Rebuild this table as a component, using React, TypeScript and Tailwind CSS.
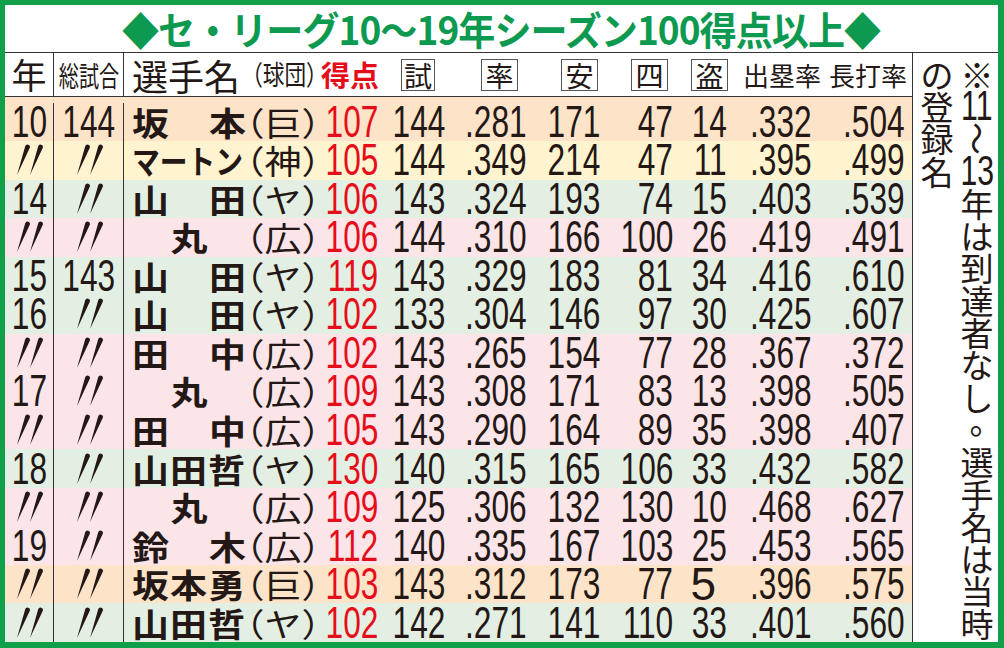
import type { ReactNode } from "react"

// セ・リーグ 10〜19年 シーズン100得点以上の一覧表
type Row = {
  y: string
  g: string
  name: string
  team: string
  pts: string
  gp: string
  avg: string
  h: string
  bb: string
  sb: string
  obp: string
  slg: string
}

const rows: Row[] = [
  { y: "10", g: "144", name: "坂本", team: "巨", pts: "107", gp: "144", avg: ".281", h: "171", bb: "47", sb: "14", obp: ".332", slg: ".504" },
  { y: "//", g: "//", name: "マートン", team: "神", pts: "105", gp: "144", avg: ".349", h: "214", bb: "47", sb: "11", obp: ".395", slg: ".499" },
  { y: "14", g: "//", name: "山田", team: "ヤ", pts: "106", gp: "143", avg: ".324", h: "193", bb: "74", sb: "15", obp: ".403", slg: ".539" },
  { y: "//", g: "//", name: "丸", team: "広", pts: "106", gp: "144", avg: ".310", h: "166", bb: "100", sb: "26", obp: ".419", slg: ".491" },
  { y: "15", g: "143", name: "山田", team: "ヤ", pts: "119", gp: "143", avg: ".329", h: "183", bb: "81", sb: "34", obp: ".416", slg: ".610" },
  { y: "16", g: "//", name: "山田", team: "ヤ", pts: "102", gp: "133", avg: ".304", h: "146", bb: "97", sb: "30", obp: ".425", slg: ".607" },
  { y: "//", g: "//", name: "田中", team: "広", pts: "102", gp: "143", avg: ".265", h: "154", bb: "77", sb: "28", obp: ".367", slg: ".372" },
  { y: "17", g: "//", name: "丸", team: "広", pts: "109", gp: "143", avg: ".308", h: "171", bb: "83", sb: "13", obp: ".398", slg: ".505" },
  { y: "//", g: "//", name: "田中", team: "広", pts: "105", gp: "143", avg: ".290", h: "164", bb: "89", sb: "35", obp: ".398", slg: ".407" },
  { y: "18", g: "//", name: "山田哲", team: "ヤ", pts: "130", gp: "140", avg: ".315", h: "165", bb: "106", sb: "33", obp: ".432", slg: ".582" },
  { y: "//", g: "//", name: "丸", team: "広", pts: "109", gp: "125", avg: ".306", h: "132", bb: "130", sb: "10", obp: ".468", slg: ".627" },
  { y: "19", g: "//", name: "鈴木", team: "広", pts: "112", gp: "140", avg: ".335", h: "167", bb: "103", sb: "25", obp: ".453", slg: ".565" },
  { y: "//", g: "//", name: "坂本勇", team: "巨", pts: "103", gp: "143", avg: ".312", h: "173", bb: "77", sb: "5", obp: ".396", slg: ".575" },
  { y: "//", g: "//", name: "山田哲", team: "ヤ", pts: "102", gp: "142", avg: ".271", h: "141", bb: "110", sb: "33", obp: ".401", slg: ".560" },
]

// 球団ごとの行の背景色
const teamBg: Record<string, string> = {
  巨: "bg-[#fde4c8]",
  神: "bg-[#fff4cf]",
  ヤ: "bg-[#e4efe3]",
  広: "bg-[#fbe5e8]",
}

const jp = "font-['Noto_Sans_CJK_JP',sans-serif]"

// 右端の縦書き注記（1文字ずつ）
const noteRight = ["※", "11", "～", "13", "年", "は", "到", "達", "者", "な", "し", "。", "選", "手", "名", "は", "当", "時"]
const noteLeft = ["の", "登", "録", "名"]

// 同上記号（〃）
function Ditto() {
  return (
    <svg width="30" height="32" viewBox="0 0 30 32" className="fill-[#231815]">
      <path d="M11.2 2.2a2.4 2.4 0 0 1 4.6 1.5L3 31z" />
      <path d="M24.2 2.2a2.4 2.4 0 0 1 4.6 1.5L16 31z" />
    </svg>
  )
}

function Num({ v, w, red }: { v: string; w: string; red?: boolean }) {
  return (
    <div className={`flex shrink-0 justify-end ${w} ${red ? "text-[#e60d1b]" : ""}`}>
      <span className="inline-block shrink-0 origin-right scale-x-[0.72] whitespace-nowrap">{v}</span>
    </div>
  )
}

function Name({ name }: { name: string }) {
  let inner: ReactNode
  if (name === "マートン") {
    inner = <span className="inline-block origin-left scale-x-[0.75] whitespace-nowrap">{name}</span>
  } else if (name.length === 2) {
    inner = (
      <span className="flex w-full justify-between">
        <span>{name[0]}</span>
        <span>{name[1]}</span>
      </span>
    )
  } else if (name.length === 1) {
    inner = <span className="flex w-full justify-center">{name}</span>
  } else {
    inner = <span className="tracking-[1px] whitespace-nowrap">{name}</span>
  }
  return (
    <div className={`w-[122px] shrink-0 pl-[8px] ${jp} text-[37px] font-bold`}>
      <div className="flex w-[114px] scale-y-[0.88]">{inner}</div>
    </div>
  )
}

function Team({ t }: { t: string }) {
  return (
    <div className={`w-[75px] shrink-0 ${jp} text-[37px] [font-feature-settings:'halt'] whitespace-nowrap`}>
      <span className="inline-block scale-y-[0.88]">（{t}）</span>
    </div>
  )
}

function Box({ c, ml, w }: { c: string; ml: string; w: string }) {
  return (
    <div className={`flex h-[32px] shrink-0 items-center justify-center border border-[#555] text-[28px] leading-none ${ml} ${w}`}>
      {c}
    </div>
  )
}

function DataRow({ r, first }: { r: Row; first?: boolean }) {
  const bg = teamBg[r.team]
  return (
    <div className={`flex ${bg} ${first ? "h-[44px] pt-[6px]" : "min-h-0 flex-1"} font-['Liberation_Sans',sans-serif] text-[44px] leading-[38px] text-[#231815]`}>
      <div className="flex w-[49px] shrink-0 items-center justify-center border-r border-[#333]">
        {r.y === "//" ? <Ditto /> : <span className="inline-block scale-x-[0.72]">{r.y}</span>}
      </div>
      <div className="flex w-[70px] shrink-0 items-center justify-center border-r border-[#333]">
        {r.g === "//" ? <Ditto /> : <span className="inline-block scale-x-[0.72]">{r.g}</span>}
      </div>
      <div className="flex flex-1 items-center">
        <Name name={r.name} />
        <Team t={r.team} />
        <Num v={r.pts} w="w-[57px]" red />
        <Num v={r.gp} w="w-[67px]" />
        <Num v={r.avg} w="w-[82px]" />
        <Num v={r.h} w="w-[73px]" />
        <Num v={r.bb} w="w-[73px]" />
        {r.sb === "5" ? (
          <div className="flex w-[54px] shrink-0 justify-end pr-[11px]">
            <span className="inline-block text-[46px] leading-[38px] font-normal">5</span>
          </div>
        ) : (
          <Num v={r.sb} w="w-[54px]" />
        )}
        <Num v={r.obp} w="w-[85px]" />
        <Num v={r.slg} w="w-[93px]" />
      </div>
    </div>
  )
}

function NoteChar({ c }: { c: string }) {
  if (c === "11" || c === "13") {
    return (
      <div className="flex h-[32.3px] items-center justify-center font-['Liberation_Sans',sans-serif] text-[42px] leading-none">
        <span className="inline-block scale-x-[0.72]">{c}</span>
      </div>
    )
  }
  if (c === "～") {
    return (
      <div className="flex h-[32.3px] items-center justify-center">
        <span className="inline-block rotate-90">{c}</span>
      </div>
    )
  }
  if (c === "。") {
    return (
      <div className="flex h-[32.3px] items-center justify-center">
        <span className="inline-block translate-x-[9px] -translate-y-[9px]">{c}</span>
      </div>
    )
  }
  return <div className="flex h-[32.3px] items-center justify-center">{c}</div>
}

export default function App() {
  return (
    <div className="h-[648px] w-[1004px] bg-white">
      <div className={`flex h-full w-full flex-col border-t-[5px] border-r-[6px] border-b-[6px] border-l-[5px] border-[#10a04a] text-[#231815] ${jp}`}>
        <div className="flex h-[48px] shrink-0 items-center justify-center border-b border-[#333]">
          <span className="inline-block scale-x-[0.95] text-[39px] font-bold leading-none tracking-[-1px] text-[#0d9a50]">
            ◆セ・リーグ10～19年シーズン100得点以上◆
          </span>
        </div>
        <div className="flex min-h-0 flex-1">
          <div className="flex w-[907px] shrink-0 flex-col">
            <div className="flex h-[44px] shrink-0 items-center border-b border-[#333]">
              <div className="flex h-full w-[49px] shrink-0 items-center justify-center border-r border-[#333] text-[35px]">
                年
              </div>
              <div className="flex h-full w-[70px] shrink-0 items-center justify-center border-r border-[#333]">
                <span className="inline-block scale-x-[0.72] text-[28px] whitespace-nowrap">総試合</span>
              </div>
              <div className="flex flex-1 items-center">
                <div className="w-[122px] shrink-0 pl-[8px] text-[36px] whitespace-nowrap">選手名</div>
                <div className="w-[75px] shrink-0 pl-[6px] text-[27px] whitespace-nowrap [font-feature-settings:'halt']">
                  <span className="inline-block origin-left scale-x-[0.8]">（球団）</span>
                </div>
                <div className="w-[57px] shrink-0 text-right text-[29px] font-bold whitespace-nowrap text-[#e60d1b]">得点</div>
                <Box c="試" ml="ml-[23px]" w="w-[34px]" />
                <Box c="率" ml="ml-[46px]" w="w-[37px]" />
                <Box c="安" ml="ml-[43px]" w="w-[37px]" />
                <Box c="四" ml="ml-[33px]" w="w-[37px]" />
                <Box c="盗" ml="ml-[23px]" w="w-[37px]" />
                <div className="ml-[15px] w-[80px] shrink-0 text-[26px] whitespace-nowrap">出塁率</div>
                <div className="ml-[6px] w-[80px] shrink-0 text-[26px] whitespace-nowrap">長打率</div>
              </div>
            </div>
            {rows.map((r, i) => (
              <DataRow key={i} r={r} first={i === 0} />
            ))}
          </div>
          <div className="flex flex-1 border-l border-[#333] pt-[5px] pl-[4px] text-[33px] leading-none">
            <div className="flex w-[40px] flex-col">
              {noteLeft.map((c, i) => (
                <NoteChar key={i} c={c} />
              ))}
            </div>
            <div className="flex w-[40px] flex-col">
              {noteRight.map((c, i) => (
                <NoteChar key={i} c={c} />
              ))}
            </div>
          </div>
        </div>
      </div>
    </div>
  )
}
